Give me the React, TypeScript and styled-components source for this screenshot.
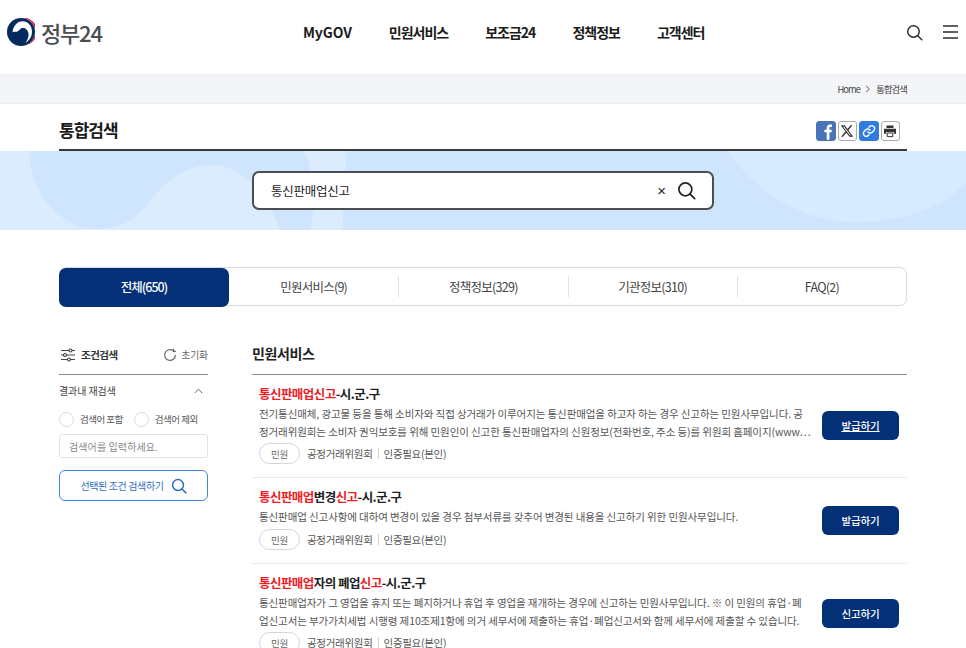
import * as React from "react";
import styled, { createGlobalStyle } from "styled-components";

const Global = createGlobalStyle`
  html, body { margin: 0; padding: 0; background: #fff; }
  body {
    font-family: "Noto Sans CJK KR", "Noto Sans", sans-serif;
    color: #1e1e1e;
    overflow: hidden;
  }
  * { box-sizing: border-box; }
`;

const Page = styled.div`
  width: 966px;
  height: 648px;
  overflow: hidden;
`;

const Header = styled.header`
  height: 74px;
  display: flex;
  align-items: center;
  padding: 0 8px 10px 7px;
`;

const Logo = styled.div`
  width: 256px;
  display: flex;
  align-items: center;
  gap: 6px;
`;

const LogoText = styled.span`
  font-size: 22px;
  font-weight: 500;
  letter-spacing: -1.2px;
  color: #4a4d52;
  line-height: 28px;
`;

const Nav = styled.nav`
  display: flex;
  gap: 37px;
  margin-left: 40px;
  flex: 1;
`;

const NavItem = styled.a<{ $latin?: boolean }>`
  font-size: 14px;
  font-weight: 700;
  letter-spacing: ${(p) => (p.$latin ? "-0.1px" : "-1px")};
  color: #1b1b1b;
`;

const HeaderIcons = styled.div`
  display: flex;
  align-items: center;
  gap: 20px;
`;

const Crumbs = styled.div`
  height: 30px;
  background: #f4f5f9;
  border-top: 1px solid #eceef2;
  border-bottom: 1px solid #eceef2;
  display: flex;
  align-items: center;
  justify-content: flex-end;
  gap: 5px;
  padding-right: 59px;
  font-size: 9.3px;
  letter-spacing: -0.85px;
  color: #444;
`;

const TitleRow = styled.div`
  margin: 0 59px;
  height: 47px;
  border-bottom: 2px solid #3a3a3a;
  display: flex;
  align-items: center;
  justify-content: space-between;
  padding: 6px 7px 0 0;
`;

const Title = styled.h1`
  margin: 0;
  font-size: 17px;
  font-weight: 700;
  letter-spacing: -1px;
  color: #1b1b1b;
`;

const Shares = styled.div`
  display: flex;
  gap: 2px;
  margin-top: 2px;
`;

const ShareBox = styled.span<{ $bg: string; $line: string }>`
  width: 19.5px;
  height: 20px;
  border-radius: 3px;
  background: ${(p) => p.$bg};
  border: 1px solid ${(p) => p.$line};
  display: flex;
  align-items: center;
  justify-content: center;
  overflow: hidden;
`;

const Hero = styled.section`
  position: relative;
  height: 79px;
  background: #dcecff;
  display: flex;
  justify-content: center;
  align-items: center;
  overflow: hidden;
`;

const HeroArt = styled.svg`
  position: absolute;
  inset: 0;
`;

const SearchBox = styled.div`
  position: relative;
  width: 462px;
  height: 39px;
  margin-top: -1px;
  background: #fff;
  border: 2px solid #4a4d52;
  border-radius: 7px;
  display: flex;
  align-items: center;
  padding: 0 16px 0 17px;
`;

const SearchText = styled.span`
  flex: 1;
  font-size: 12.5px;
  letter-spacing: -0.25px;
  color: #222;
`;

const Clear = styled.span`
  font-family: "Liberation Sans", sans-serif;
  font-size: 15px;
  color: #222;
  margin-right: 11px;
`;

const Tabs = styled.div`
  margin: 37px 59px 0;
  height: 39px;
  border: 1px solid #d9dadd;
  border-radius: 7px;
  display: grid;
  grid-template-columns: 169px repeat(4, 1fr);
  align-items: center;
`;

const Tab = styled.div<{ $active?: boolean; $line?: boolean }>`
  height: ${(p) => (p.$active ? "39px" : "21px")};
  margin: ${(p) => (p.$active ? "0 0 0 -1px" : "-2px 0 0")};
  background: ${(p) => (p.$active ? "#033077" : "transparent")};
  border-radius: ${(p) => (p.$active ? "7px" : "0")};
  border-left: ${(p) => (p.$line ? "1px solid #dfe0e3" : "none")};
  color: ${(p) => (p.$active ? "#fff" : "#444")};
  font-size: 12.5px;
  font-weight: ${(p) => (p.$active ? 500 : 400)};
  letter-spacing: ${(p) => (p.$active ? "-0.95px" : "-0.75px")};
  padding-bottom: ${(p) => (p.$active ? "3px" : "0")};
  display: flex;
  align-items: center;
  justify-content: center;
`;

const Body = styled.div`
  margin: 33px 59px 0;
  display: grid;
  grid-template-columns: 149px minmax(0, 1fr);
  column-gap: 44px;
`;

const Side = styled.aside``;

const SideHead = styled.div`
  height: 36px;
  padding: 9px 0 0 1px;
  border-bottom: 1px solid #8a8a8a;
  display: flex;
  align-items: flex-start;
  justify-content: space-between;
`;

const SideTitle = styled.div`
  display: flex;
  align-items: center;
  gap: 5px;
  font-size: 10.5px;
  font-weight: 700;
  letter-spacing: -0.5px;
  color: #333;
  line-height: 14px;
`;

const Reset = styled.div`
  display: flex;
  align-items: center;
  gap: 4px;
  font-size: 9.8px;
  letter-spacing: -0.1px;
  color: #666;
  line-height: 14px;
`;

const SideRow = styled.div`
  display: flex;
  align-items: center;
  justify-content: space-between;
  height: 31px;
  padding-right: 5px;
  font-size: 10px;
  letter-spacing: -0.1px;
  color: #444;
`;

const Radios = styled.div`
  display: flex;
  gap: 11px;
  margin-top: 3px;
  height: 20px;
  align-items: center;
`;

const RadioLabel = styled.label`
  display: flex;
  align-items: center;
  gap: 6px;
  font-size: 9.5px;
  letter-spacing: -0.5px;
  color: #555;
`;

const RadioDot = styled.span`
  width: 15px;
  height: 15px;
  border: 1px solid #d9dadd;
  border-radius: 50%;
  background: #fff;
`;

const FieldBox = styled.div`
  margin-top: 5px;
  height: 24px;
  border: 1px solid #e0e1e4;
  border-radius: 3px;
  padding: 0 9px;
  display: flex;
  align-items: center;
  font-size: 10px;
  letter-spacing: 0.1px;
  color: #8a8a8a;
`;

const SideButton = styled.button`
  margin-top: 12px;
  width: 149px;
  height: 31px;
  background: #fff;
  border: 1px solid #3a86e0;
  border-radius: 6px;
  display: flex;
  align-items: center;
  justify-content: center;
  gap: 7px;
  padding: 0;
  font-family: inherit;
  font-size: 10px;
  letter-spacing: -0.38px;
  color: #2f6fc4;
`;

const Main = styled.main``;

const SectionTitle = styled.h2`
  margin: 0;
  height: 36px;
  padding-top: 5px;
  border-bottom: 1px solid #8a8a8a;
  font-size: 14px;
  font-weight: 700;
  letter-spacing: -0.4px;
  line-height: 18px;
  color: #222;
`;

const Row = styled.article<{ $h: number }>`
  height: ${(p) => p.$h}px;
  border-bottom: 1px solid #e8e9eb;
  padding: 9px 8px 0 7px;
  display: grid;
  grid-template-columns: minmax(0, 1fr) 77px;
  column-gap: 16px;
`;

const RowTitle = styled.h3`
  margin: 0;
  font-size: 12.5px;
  font-weight: 700;
  letter-spacing: -0.55px;
  line-height: 20px;
  color: #222;
`;

const Hit = styled.em`
  font-style: normal;
  color: #ee1c25;
`;

const Desc = styled.p`
  margin: 1px 0 0;
  font-size: 10.5px;
  letter-spacing: -0.1px;
  line-height: 18px;
  color: #555;
  white-space: nowrap;
`;

const Meta = styled.div<{ $single: boolean }>`
  display: flex;
  align-items: center;
  margin-top: ${(p) => (p.$single ? "3px" : "2px")};
  font-size: 10.5px;
  letter-spacing: -0.3px;
  color: #555;
`;

const Pill = styled.span`
  width: 41px;
  height: 21px;
  border: 1px solid #d4d5d8;
  border-radius: 11px;
  display: flex;
  align-items: center;
  justify-content: center;
  font-size: 9.5px;
  color: #666;
  margin-right: 7px;
`;

const MetaSep = styled.span`
  width: 1px;
  height: 11px;
  background: #cfd0d3;
  margin: 0 5px;
`;

const ActionCell = styled.div`
  display: flex;
  align-items: center;
  padding-bottom: 10px;
`;

const Action = styled.a<{ $hover?: boolean }>`
  width: 77px;
  height: 29px;
  background: #033077;
  border-radius: 6px;
  display: flex;
  align-items: center;
  justify-content: center;
  font-size: 10.5px;
  font-weight: 500;
  letter-spacing: -0.1px;
  color: #fff;
  text-decoration: ${(p) => (p.$hover ? "underline" : "none")};
`;

function SearchIcon(props: { size: number; color: string; width: number }) {
  const { size, color, width } = props;
  return (
    <svg width={size} height={size} viewBox="0 0 20 20" fill="none" stroke={color} strokeWidth={width} strokeLinecap="round">
      <circle cx="8.8" cy="8.8" r="6.8" />
      <path d="M13.8 13.8 18.6 18.6" />
    </svg>
  );
}

function GovLogo() {
  return (
    <svg width="28" height="28" viewBox="0 0 28 28">
      <circle cx="14" cy="14" r="14" fill="#032b5f" />
      <path d="M13 0A14 14 0 0 1 19.5 26.9A13.4 13.4 0 0 0 13 0Z" fill="#e0203a" />
      <path
        d="M5.5 14.5C6 8 10.5 3.2 15.5 3.2 21 3.2 25 8 25 13.5 25 18.5 22.5 22.5 18.5 25 20.5 22 21.8 19 21.5 15.5 21 12 18.5 10 16 10 13 10 12.5 12.5 10.5 13.5 8.5 14.5 6.5 13 5.5 14.5Z"
        fill="#fff"
      />
    </svg>
  );
}

function HeroShapes() {
  return (
    <HeroArt width="966" height="79" viewBox="0 0 966 79">
      <path
        d="M29 -1C30 42 60 78 98 78 128 78 141 62 155 44 170 26 190 14 212 14 240 14 268 42 280 79L310 79C316 52 314 22 304 -1Z"
        fill="#cfe5fe"
      />
      <path d="M347 -1C344 30 342 55 343 79L966 79 966 -1Z" fill="#cfe5fe" />
      <path d="M727 -1C755 40 800 71 857 71 905 71 945 55 966 32L966 -1Z" fill="#d8eaff" />
    </HeroArt>
  );
}

const rows = [
  {
    h: 103,
    title: (
      <>
        <Hit>통신판매업신고</Hit>-시.군.구
      </>
    ),
    lines: [
      "전기통신매체, 광고물 등을 통해 소비자와 직접 상거래가 이루어지는 통신판매업을 하고자 하는 경우 신고하는 민원사무입니다. 공",
      "정거래위원회는 소비자 권익보호를 위해 민원인이 신고한 통신판매업자의 신원정보(전화번호, 주소 등)를 위원회 홈페이지(www⋯",
    ],
    action: "발급하기",
    hover: true,
  },
  {
    h: 86,
    title: (
      <>
        <Hit>통신판매업</Hit>변경<Hit>신고</Hit>-시.군.구
      </>
    ),
    lines: ["통신판매업 신고사항에 대하여 변경이 있을 경우 첨부서류를 갖추어 변경된 내용을 신고하기 위한 민원사무입니다."],
    action: "발급하기",
  },
  {
    h: 100,
    title: (
      <>
        <Hit>통신판매업</Hit>자의 폐업<Hit>신고</Hit>-시.군.구
      </>
    ),
    lines: [
      "통신판매업자가 그 영업을 휴지 또는 폐지하거나 휴업 후 영업을 재개하는 경우에 신고하는 민원사무입니다. ※ 이 민원의 휴업·폐",
      "업신고서는 부가가치세법 시행령 제10조제1항에 의거 세무서에 제출하는 휴업·폐업신고서와 함께 세무서에 제출할 수 있습니다.",
    ],
    action: "신고하기",
  },
];

export default function App() {
  return (
    <Page>
      <Global />
      <Header>
        <Logo>
          <GovLogo />
          <LogoText>정부24</LogoText>
        </Logo>
        <Nav>
          <NavItem $latin>MyGOV</NavItem>
          {["민원서비스", "보조금24", "정책정보", "고객센터"].map((n) => (
            <NavItem key={n}>{n}</NavItem>
          ))}
        </Nav>
        <HeaderIcons>
          <SearchIcon size={17} color="#2a2a2a" width={1.7} />
          <svg width="15" height="14" viewBox="0 0 15 14" stroke="#2a2a2a" strokeWidth="1.4">
            <path d="M0 1h15M0 7h15M0 13h15" />
          </svg>
        </HeaderIcons>
      </Header>
      <Crumbs>
        <span>Home</span>
        <svg width="6" height="8" viewBox="0 0 6 8" fill="none" stroke="#666" strokeWidth="1">
          <path d="M1 .8 4.4 4 1 7.2" />
        </svg>
        <span>통합검색</span>
      </Crumbs>
      <TitleRow>
        <Title>통합검색</Title>
        <Shares>
          <ShareBox $bg="#4a74b8" $line="#4a74b8">
            <svg width="18" height="18" viewBox="0 0 18 18">
              <path d="M10 18V10.4H7.6V7.6H10V5.7C10 3.4 11.4 2.2 13.4 2.2H15.4V5H14C13 5 12.8 5.5 12.8 6.2V7.6H15.3L14.9 10.4H12.8V18Z" fill="#fff" />
            </svg>
          </ShareBox>
          <ShareBox $bg="#fff" $line="#a9abae">
            <svg width="14" height="14" viewBox="0 0 24 24" fill="#333">
              <path d="M18.2 2.3h3.3l-7.2 8.2 8.5 11.2h-6.7l-5.2-6.8-6 6.8H1.7l7.7-8.8L1.3 2.3h6.8l4.7 6.2zm-1.2 17.5h1.8L7.1 4.1h-2z" />
            </svg>
          </ShareBox>
          <ShareBox $bg="#2f7be0" $line="#2f7be0">
            <svg width="14" height="14" viewBox="0 0 24 24" fill="none" stroke="#fff" strokeWidth="2.4" strokeLinecap="round">
              <path d="M10 13.5a5 5 0 0 0 7.5.5l3-3a5 5 0 0 0-7-7l-1.7 1.7" />
              <path d="M14 10.5a5 5 0 0 0-7.5-.5l-3 3a5 5 0 0 0 7 7l1.7-1.7" />
            </svg>
          </ShareBox>
          <ShareBox $bg="#fff" $line="#a9abae">
            <svg width="14" height="14" viewBox="0 0 14 14" fill="#333">
              <path d="M3.5 1.5h7v2.6h-7zM1 4.8h12v5H10.8V8H3.2v1.8H1z" />
              <path d="M4.2 9h5.6v3.6H4.2z" fill="#fff" stroke="#333" strokeWidth="1" />
            </svg>
          </ShareBox>
        </Shares>
      </TitleRow>
      <Hero>
        <HeroShapes />
        <SearchBox>
          <SearchText>통신판매업신고</SearchText>
          <Clear>×</Clear>
          <SearchIcon size={19} color="#222" width={1.8} />
        </SearchBox>
      </Hero>
      <Tabs>
        <Tab $active>전체(650)</Tab>
        <Tab>민원서비스(9)</Tab>
        <Tab $line>정책정보(329)</Tab>
        <Tab $line>기관정보(310)</Tab>
        <Tab $line>FAQ(2)</Tab>
      </Tabs>
      <Body>
        <Side>
          <SideHead>
            <SideTitle>
              <svg width="16" height="14" viewBox="0 0 16 14" fill="none" stroke="#444" strokeWidth="1.2">
                <path d="M1 2.5h14M1 7h14M1 11.5h14" />
                <circle cx="10.5" cy="2.5" r="1.5" fill="#fff" />
                <circle cx="5" cy="7" r="1.5" fill="#fff" />
                <circle cx="9" cy="11.5" r="1.5" fill="#fff" />
              </svg>
              조건검색
            </SideTitle>
            <Reset>
              <svg width="14" height="14" viewBox="0 0 13 13" fill="none" stroke="#666" strokeWidth="1.1">
                <path d="M11.5 6.5A5 5 0 1 1 9.5 2.5" />
                <path d="M9.8.8v2.4H12" />
              </svg>
              초기화
            </Reset>
          </SideHead>
          <SideRow>
            <span>결과내 재검색</span>
            <svg width="9" height="6" viewBox="0 0 9 6" fill="none" stroke="#666" strokeWidth="1">
              <path d="M.8 5 4.5 1.2 8.2 5" />
            </svg>
          </SideRow>
          <Radios>
            <RadioLabel>
              <RadioDot />
              검색어 포함
            </RadioLabel>
            <RadioLabel>
              <RadioDot />
              검색어 제외
            </RadioLabel>
          </Radios>
          <FieldBox>검색어를 입력하세요.</FieldBox>
          <SideButton>
            선택된 조건 검색하기
            <SearchIcon size={16} color="#2f6fc4" width={1.9} />
          </SideButton>
        </Side>
        <Main>
          <SectionTitle>민원서비스</SectionTitle>
          {rows.map((r, i) => (
            <Row key={i} $h={r.h}>
              <div>
                <RowTitle>{r.title}</RowTitle>
                <Desc>
                  {r.lines.map((l, j) => (
                    <React.Fragment key={j}>
                      {l}
                      {j < r.lines.length - 1 && <br />}
                    </React.Fragment>
                  ))}
                </Desc>
                <Meta $single={r.lines.length === 1}>
                  <Pill>민원</Pill>
                  공정거래위원회
                  <MetaSep />
                  인증필요(본인)
                </Meta>
              </div>
              <ActionCell>
                <Action $hover={r.hover}>{r.action}</Action>
              </ActionCell>
            </Row>
          ))}
        </Main>
      </Body>
    </Page>
  );
}
